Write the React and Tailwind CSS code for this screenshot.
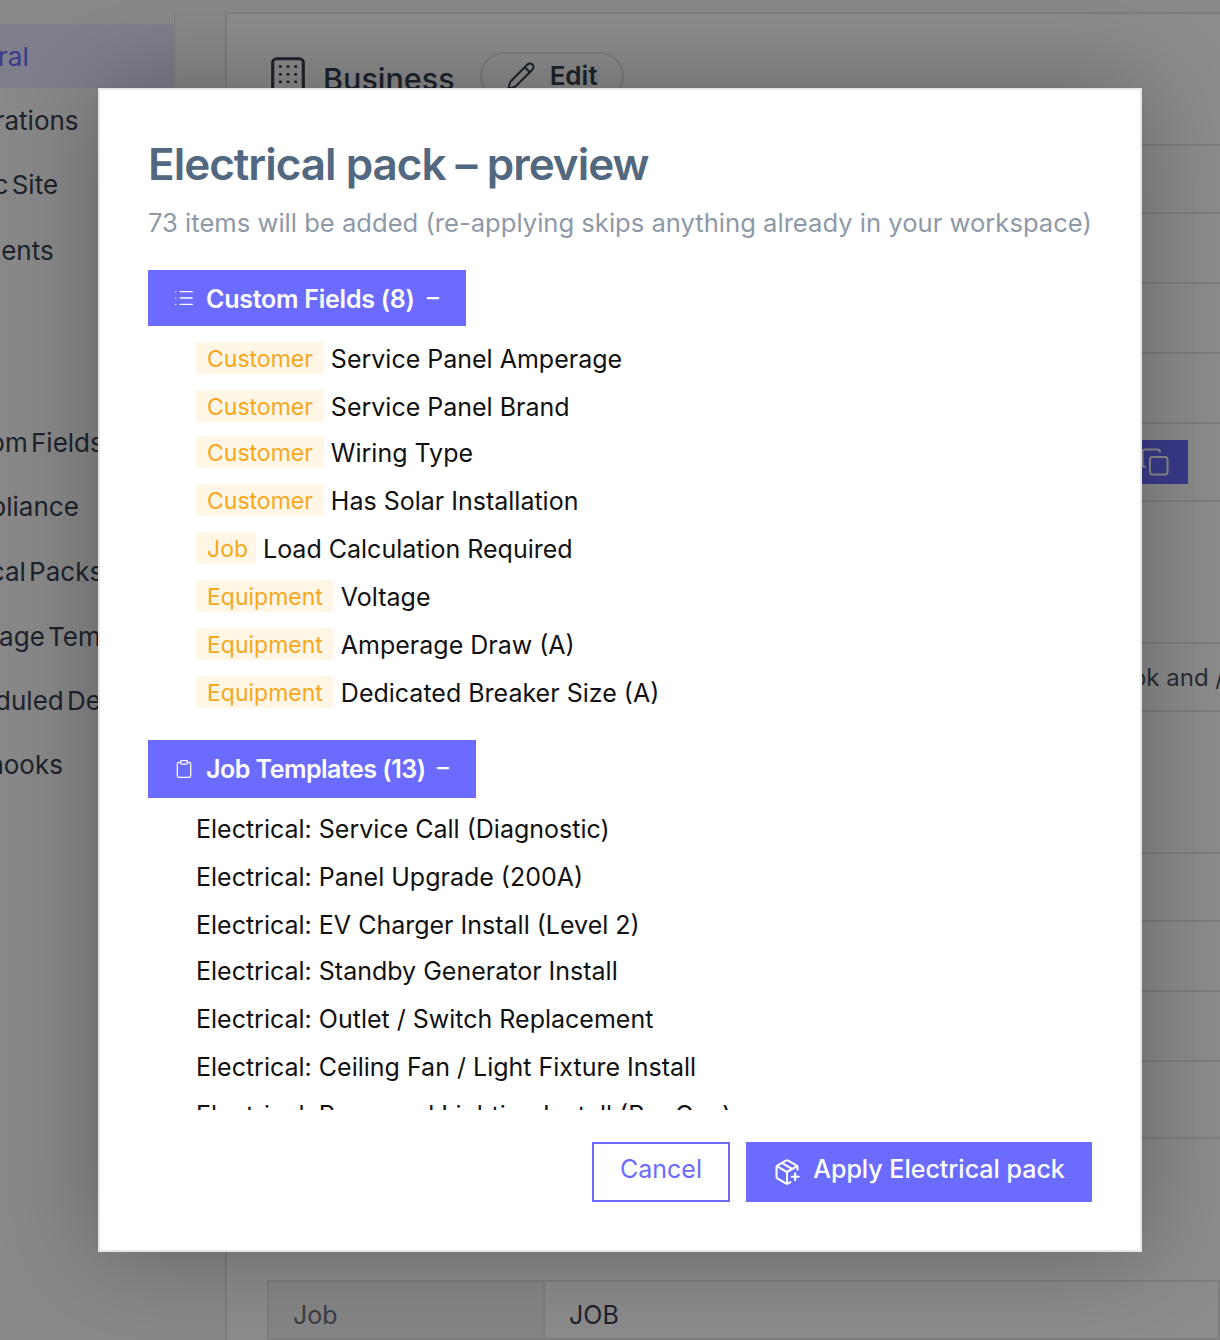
import React from "react";
import { Building, Pencil, Copy, List, Clipboard, Minus, PackagePlus } from "lucide-react";

const navTop = [
  ["General", "h-[64px] text-[#6b6cff] bg-[#e8e8ff]"],
  ["Integrations", "h-[64px] text-[#374151]"],
  ["Public Site", "h-[65px] text-[#374151]"],
  ["Payments", "h-[66px] text-[#374151]"],
];
const navBottom = [
  ["Custom Fields", "h-[64px]"],
  ["Compliance", "h-[64px]"],
  ["Vertical Packs", "h-[66px]"],
  ["Message Templates", "h-[64px]"],
  ["Scheduled Delivery", "h-[64px]"],
  ["Webhooks", "h-[64px]"],
];
const rowHeights = ["h-[68px]", "h-[70px]", "h-[70px]", "h-[70px]", "h-[78px]", "h-[142px]", "h-[68px]", "h-[142px]", "h-[68px]", "h-[70px]", "h-[70px]", "h-[77px]"];

const fields = [
  ["Customer", "Service Panel Amperage", "", "px-[11px]"],
  ["Customer", "Service Panel Brand", "", "px-[11px]"],
  ["Customer", "Wiring Type", "-mt-[2px]", "px-[11px]"],
  ["Customer", "Has Solar Installation", "", "px-[11px]"],
  ["Job", "Load Calculation Required", "", "w-[60px] pl-[11px]"],
  ["Equipment", "Voltage", "", "px-[11px]"],
  ["Equipment", "Amperage Draw (A)", "", "px-[11px]"],
  ["Equipment", "Dedicated Breaker Size (A)", "", "px-[11px]"],
];
const jobs = [
  ["Electrical: Service Call (Diagnostic)", ""],
  ["Electrical: Panel Upgrade (200A)", ""],
  ["Electrical: EV Charger Install (Level 2)", ""],
  ["Electrical: Standby Generator Install", "-mt-[2px]"],
  ["Electrical: Outlet / Switch Replacement", ""],
  ["Electrical: Ceiling Fan / Light Fixture Install", ""],
  ["Electrical: Recessed Lighting Install (Per Can)", ""],
];

export default function App() {
  return (
    <div className="relative w-[1220px] h-[1340px] overflow-hidden bg-white font-['Inter',sans-serif]">
      {/* page behind the dialog */}
      <div className="flex h-full pt-[12px] bg-[#fafafa]">
        <aside className="w-[275px] h-[1000px] shrink-0 -ml-[100px] pt-[12px] bg-[#fafafa] border-r border-[#e5e5e5] text-[26px] [word-spacing:-4px]">
          {navTop.map(([t, c]) => (
            <div key={t} className={`flex items-center pl-[33px] ${c}`}>{t}</div>
          ))}
          <div className="h-[127px]" />
          {navBottom.map(([t, c]) => (
            <div key={t} className={`flex items-center pl-[33px] text-[#374151] whitespace-nowrap overflow-hidden ${c}`}>{t}</div>
          ))}
        </aside>
        <main className="ml-[50px] flex-1 min-w-0 h-full bg-white border-l-2 border-t-2 border-[#e5e5e5] flex flex-col">
          <div className="h-[130px] shrink-0 pl-[38px] pt-[38px] flex items-start gap-[25px]">
            <div className="flex items-center gap-[12px] pt-[2px]">
              <Building className="w-[46px] h-[46px] text-[#374151]" strokeWidth={1.6} />
              <span className="text-[30.5px] font-medium text-[#374151] pt-[2px]">Business</span>
            </div>
            <div className="flex items-center gap-[14px] h-[48px] w-[144px] justify-center rounded-full border-2 border-[#e5e5e5] text-[#374151]">
              <Pencil className="w-[30px] h-[30px]" strokeWidth={1.6} />
              <span className="text-[26px] font-semibold -mt-[2px]">Edit</span>
            </div>
          </div>
          {rowHeights.map((h, i) => (
            <div key={i} className={`${h} shrink-0 border-t-2 border-[#e5e5e5] relative flex items-center justify-end`}>
              {i === 4 && (
                <div className="mr-[32px] w-[100px] h-[44px] bg-[#6b6cff] flex items-center justify-end pr-[18px] text-white">
                  <Copy className="w-[30px] h-[30px]" strokeWidth={1.6} />
                </div>
              )}
              {i === 6 && <span className="text-[24px] text-[#4b5563] whitespace-nowrap -mr-[4px] pt-[2px]">Webhook and /</span>}
            </div>
          ))}
          <div className="h-[143px] shrink-0 border-t-2 border-[#e5e5e5]" />
          <div className="ml-[40px] flex-1 border-2 border-[#e5e5e5] flex text-[25px]">
            <div className="w-[276px] shrink-0 pl-[24px] pt-[15px] bg-[#f5f5f5] border-r-2 border-[#e5e5e5] text-[#6b7280]">Job</div>
            <div className="flex-1 pl-[24px] pt-[15px] text-[#374151]">JOB</div>
          </div>
        </main>
      </div>

      {/* overlay */}
      <div className="absolute inset-0 bg-black/45" />

      {/* dialog */}
      <div className="absolute left-[98px] top-[88px] w-[1044px] h-[1164px] bg-white border-2 border-[#e6e6e6] shadow-[0_0_90px_rgba(0,0,0,0.3)] flex flex-col pl-[48px] pr-[48px] pt-[48px] pb-[48px]">
        <h2 className="h-[52px] flex items-center text-[44px] font-semibold tracking-[-1px] text-[#526880] leading-none whitespace-nowrap">Electrical pack – preview</h2>
        <p className="mt-[17px] h-[32px] flex items-center text-[25.6px] leading-none text-[#8e99a8] whitespace-nowrap">73 items will be added (re-applying skips anything already in your workspace)</p>

        <div className="mt-[31px] flex-1 min-h-0 overflow-hidden mb-[32px]">
          <div className="inline-flex items-center h-[56px] w-[318px] bg-[#6b6cff] text-white pl-[25px] pt-[4px] align-top">
            <List className="w-[22px] h-[22px] shrink-0 -mt-[4px]" strokeWidth={1.5} />
            <span className="ml-[11px] text-[25px] font-semibold tracking-[-0.25px] whitespace-nowrap">Custom Fields (8)</span>
            <Minus className="ml-[9px] w-[18px] h-[18px] -mt-[4px]" strokeWidth={3} />
          </div>
          <div className="mt-[9px] pl-[48px]">
            {fields.map(([tag, name, extra, chip]) => (
              <div key={name} className={`h-[48px] flex items-center text-[25px] text-[#111] whitespace-nowrap ${extra}`}>
                <span className={`h-[32px] pt-[2px] bg-[#fff6e6] text-[#f5a81c] text-[23px] flex items-center mr-[7px] -mt-[2px] ${chip}`}>{tag}</span>
                <span className="pt-[2px]">{name}</span>
              </div>
            ))}
          </div>
          <div className="mt-[23px] inline-flex items-center h-[58px] w-[328px] bg-[#6b6cff] text-white pl-[26px] pt-[2px] align-top">
            <Clipboard className="w-[20px] h-[20px] shrink-0 -mt-[2px]" strokeWidth={1.5} />
            <span className="ml-[12px] text-[25px] font-semibold tracking-[-0.5px] whitespace-nowrap">Job Templates (13)</span>
            <Minus className="ml-[9px] w-[18px] h-[18px] -mt-[4px]" strokeWidth={3} />
          </div>
          <div className="mt-[7px] pl-[48px]">
            {jobs.map(([name, extra]) => (
              <div key={name} className={`h-[48px] pt-[2px] flex items-center text-[25px] text-[#111] whitespace-nowrap ${extra}`}>{name}</div>
            ))}
          </div>
        </div>

        <div className="flex justify-end gap-[16px] shrink-0">
          <button className="w-[138px] h-[60px] border-2 border-[#6b6cff] text-[#6b6cff] text-[25px] flex items-center justify-center pb-[4px]">Cancel</button>
          <button className="w-[346px] h-[60px] bg-[#6b6cff] text-white text-[25px] font-medium flex items-center justify-center gap-[12px] whitespace-nowrap pb-[4px]">
            <PackagePlus className="w-[28px] h-[28px] mt-[4px]" strokeWidth={1.75} />
            Apply Electrical pack
          </button>
        </div>
      </div>
    </div>
  );
}
